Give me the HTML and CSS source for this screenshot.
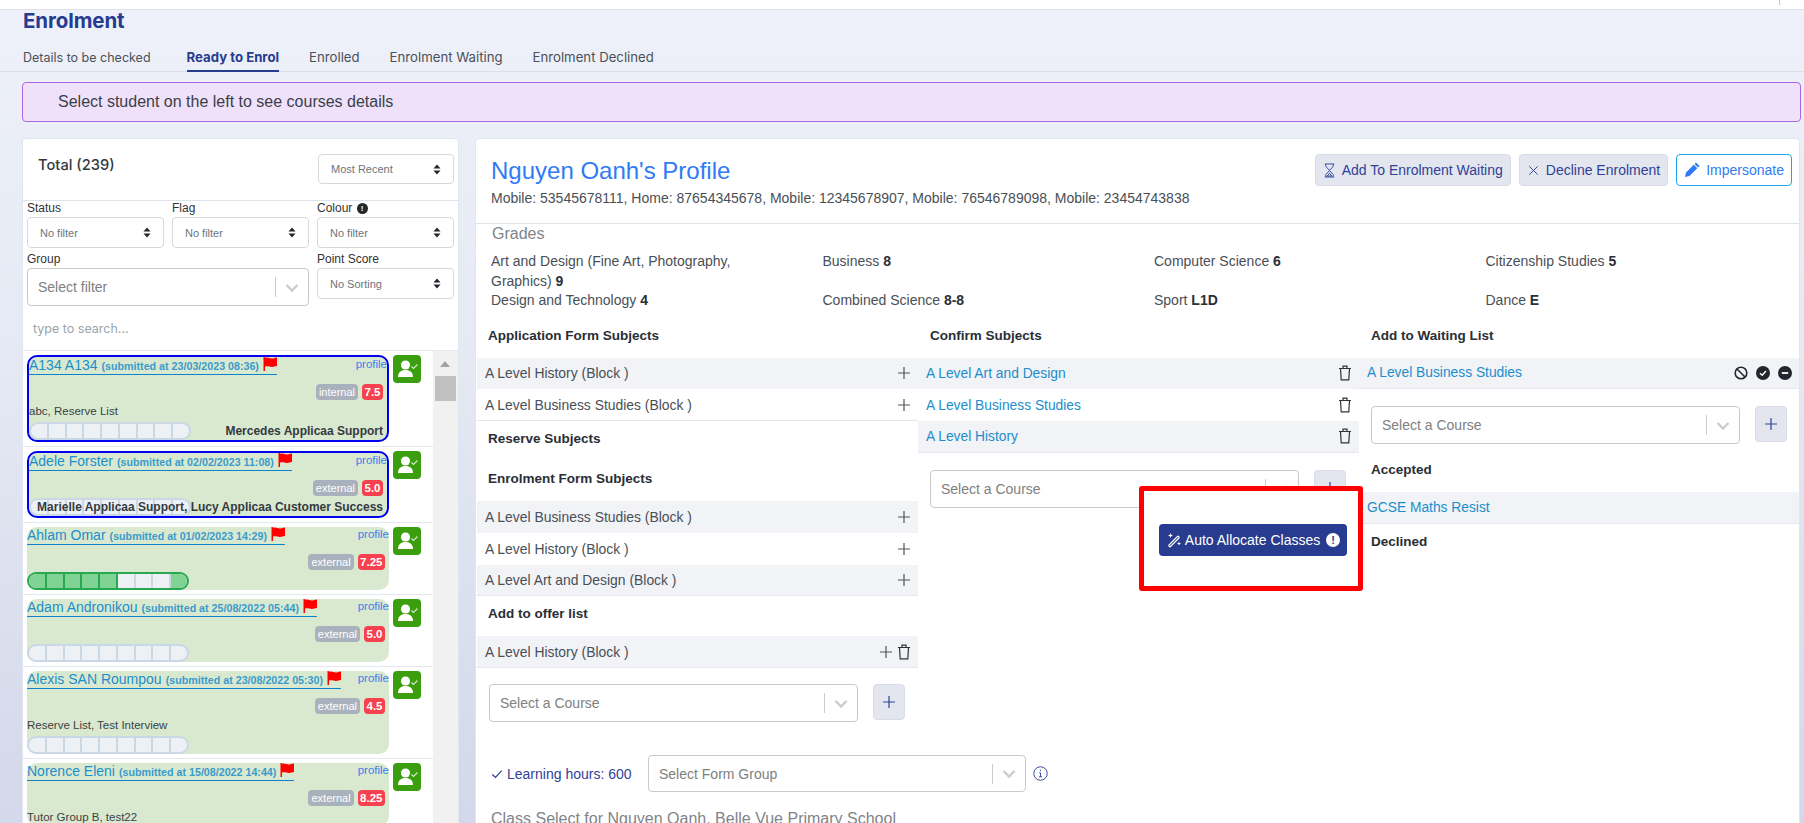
FILE: index.html
```html
<!DOCTYPE html>
<html lang="en">
<head>
<meta charset="utf-8">
<title>Enrolment</title>
<link rel="stylesheet" href="styles.css">
</head>
<body>
<svg class="defs" width="0" height="0" aria-hidden="true">
  <symbol id="sort" viewBox="0 0 10 14"><path d="M5 0.5 9.5 5.8H0.5Z M5 13.5 0.5 8.2H9.5Z"/></symbol>
  <symbol id="chev" viewBox="0 0 14 10"><path d="M1.5 2 7 7.5 12.5 2" fill="none" stroke="currentColor" stroke-width="2.4"/></symbol>
  <symbol id="flag" viewBox="0 0 14 14"><path d="M0.5 0H2V14H0.5Z M2 1C5 -0.3 7 2.2 10 1.4 11.5 1 12.5 0.8 14 0.6V9C12 9.2 11 9.8 9 9.9 6.5 10 5 8.6 2 9.6Z"/></symbol>
  <symbol id="person" viewBox="0 0 28 28"><circle cx="12.5" cy="10" r="4.6" fill="#fff"/><path d="M5 22c0-4.5 3-7 7.5-7s7.5 2.5 7.5 7z" fill="#fff"/><path d="M18.5 11.5l2 2 4-4" fill="none" stroke="#cfe8c0" stroke-width="1.2"/></symbol>
  <symbol id="plus" viewBox="0 0 14 14"><path d="M7 1V13M1 7H13" fill="none" stroke="currentColor" stroke-width="1.2"/></symbol>
  <symbol id="trash" viewBox="0 0 14 16"><path d="M1 3.5H13M5 3.5V1.2H9V3.5M2.5 3.5 3.2 14.8H10.8L11.5 3.5" fill="none" stroke="currentColor" stroke-width="1.2"/></symbol>
</svg>

<div class="topbar"><span class="topbar-tick"></span></div>

<header class="page-head">
  <h1 class="page-title">Enrolment</h1>
  <nav class="tabs">
    <a class="tab tab-first">Details to be checked</a>
    <a class="tab tab-active">Ready to Enrol</a>
    <a class="tab">Enrolled</a>
    <a class="tab">Enrolment Waiting</a>
    <a class="tab">Enrolment Declined</a>
  </nav>
</header>

<div class="alert">Select student on the left to see courses details</div>

<main class="columns">
  <section class="panel side">
    <div class="side-head">
      <div class="total">Total (239)</div>
      <div class="sel sel-recent"><span>Most Recent</span><svg class="sort"><use href="#sort"/></svg></div>
    </div>
    <div class="filters">
      <div class="field">
        <label class="lbl">Status</label>
        <div class="sel"><span>No filter</span><svg class="sort"><use href="#sort"/></svg></div>
      </div>
      <div class="field">
        <label class="lbl">Flag</label>
        <div class="sel"><span>No filter</span><svg class="sort"><use href="#sort"/></svg></div>
      </div>
      <div class="field">
        <label class="lbl">Colour <span class="dot-info">!</span></label>
        <div class="sel"><span>No filter</span><svg class="sort"><use href="#sort"/></svg></div>
      </div>
      <div class="field field-wide">
        <label class="lbl">Group</label>
        <div class="combo combo-filter"><span>Select filter</span><i class="combo-sep"></i><svg class="chev"><use href="#chev"/></svg></div>
      </div>
      <div class="field field-low">
        <label class="lbl">Point Score</label>
        <div class="sel"><span>No Sorting</span><svg class="sort"><use href="#sort"/></svg></div>
      </div>
    </div>
    <div class="search">type to search...</div>

    <div class="list-wrap">
      <div class="list">
        <article class="item">
          <div class="card card-sel">
            <div class="card-top"><a class="name">A134 A134 <small>(submitted at 23/03/2023 08:36)</small> <svg class="flag"><use href="#flag"/></svg></a><a class="profile">profile</a></div>
            <div class="badges"><span class="badge">internal</span><span class="score">7.5</span></div>
            <div class="tags">abc, Reserve List</div>
            <div class="bottom"><div class="bar"><i></i><i></i><i></i><i></i><i></i><i></i><i></i><i></i><i></i></div><div class="staff">Mercedes Applicaa Support</div></div>
          </div>
          <span class="go"><svg><use href="#person"/></svg></span>
        </article>
        <article class="item">
          <div class="card card-sel">
            <div class="card-top"><a class="name">Adele Forster <small>(submitted at 02/02/2023 11:08)</small> <svg class="flag"><use href="#flag"/></svg></a><a class="profile">profile</a></div>
            <div class="badges"><span class="badge">external</span><span class="score">5.0</span></div>
            <div class="bottom"><div class="bar"><i></i><i></i><i></i><i></i><i></i><i></i><i></i><i></i><i></i></div><div class="staff">Marielle Applicaa Support, Lucy Applicaa Customer Success</div></div>
          </div>
          <span class="go"><svg><use href="#person"/></svg></span>
        </article>
        <article class="item">
          <div class="card">
            <div class="card-top"><a class="name">Ahlam Omar <small>(submitted at 01/02/2023 14:29)</small> <svg class="flag"><use href="#flag"/></svg></a><a class="profile">profile</a></div>
            <div class="badges"><span class="badge">external</span><span class="score">7.25</span></div>
            <div class="bottom"><div class="bar bar-on"><i class="on"></i><i class="on"></i><i class="on"></i><i class="on"></i><i class="on"></i><i></i><i></i><i></i><i class="on"></i></div></div>
          </div>
          <span class="go"><svg><use href="#person"/></svg></span>
        </article>
        <article class="item">
          <div class="card">
            <div class="card-top"><a class="name">Adam Andronikou <small>(submitted at 25/08/2022 05:44)</small> <svg class="flag"><use href="#flag"/></svg></a><a class="profile">profile</a></div>
            <div class="badges"><span class="badge">external</span><span class="score">5.0</span></div>
            <div class="bottom"><div class="bar"><i></i><i></i><i></i><i></i><i></i><i></i><i></i><i></i><i></i></div></div>
          </div>
          <span class="go"><svg><use href="#person"/></svg></span>
        </article>
        <article class="item">
          <div class="card">
            <div class="card-top"><a class="name">Alexis SAN Roumpou <small>(submitted at 23/08/2022 05:30)</small> <svg class="flag"><use href="#flag"/></svg></a><a class="profile">profile</a></div>
            <div class="badges"><span class="badge">external</span><span class="score">4.5</span></div>
            <div class="tags">Reserve List, Test Interview</div>
            <div class="bottom"><div class="bar"><i></i><i></i><i></i><i></i><i></i><i></i><i></i><i></i><i></i></div></div>
          </div>
          <span class="go"><svg><use href="#person"/></svg></span>
        </article>
        <article class="item">
          <div class="card">
            <div class="card-top"><a class="name">Norence Eleni <small>(submitted at 15/08/2022 14:44)</small> <svg class="flag"><use href="#flag"/></svg></a><a class="profile">profile</a></div>
            <div class="badges"><span class="badge">external</span><span class="score">8.25</span></div>
            <div class="tags">Tutor Group B, test22</div>
          </div>
          <span class="go"><svg><use href="#person"/></svg></span>
        </article>
      </div>
      <div class="scroll"><i class="scroll-up"></i><i class="scroll-thumb"></i></div>
    </div>
  </section>

  <section class="panel profile-panel">
    <div class="profile-head">
      <div>
        <h2 class="profile-name">Nguyen Oanh's Profile</h2>
        <p class="phones">Mobile: 53545678111, Home: 87654345678, Mobile: 12345678907, Mobile: 76546789098, Mobile: 23454743838</p>
      </div>
      <div class="actions">
        <button class="btn btn-soft"><svg viewBox="0 0 14 16" class="ico"><path d="M2 1H12M2 15H12M3 1V3.5L7 8 3 12.5V15M11 1V3.5L7 8 11 12.5V15M4.5 14H9.5L7 11Z" fill="none" stroke="currentColor" stroke-width="1"/></svg>Add To Enrolment Waiting</button>
        <button class="btn btn-soft"><svg viewBox="0 0 14 16" class="ico"><path d="M2.5 3.5 11.5 12.5M11.5 3.5 2.5 12.5" fill="none" stroke="currentColor" stroke-width="1"/></svg>Decline Enrolment</button>
        <button class="btn btn-line"><svg viewBox="0 0 16 16" class="ico ico-pen"><path d="M12 0.5 15.5 4 14 5.5 10.5 2ZM9.8 2.7 13.3 6.2 5.5 14 1 15 2 10.5Z"/></svg>Impersonate</button>
      </div>
    </div>

    <div class="grades-title">Grades</div>
    <div class="grades">
      <div>Art and Design (Fine Art, Photography, Graphics) <b>9</b></div>
      <div>Business <b>8</b></div>
      <div>Computer Science <b>6</b></div>
      <div>Citizenship Studies <b>5</b></div>
      <div>Design and Technology <b>4</b></div>
      <div>Combined Science <b>8-8</b></div>
      <div>Sport <b>L1D</b></div>
      <div>Dance <b>E</b></div>
    </div>

    <div class="subjects">
      <div class="col col-first">
        <h3 class="sub-title">Application Form Subjects</h3>
        <div class="row row-alt"><span>A Level History (Block )</span><svg class="rico"><use href="#plus"/></svg></div>
        <div class="row row-end"><span>A Level Business Studies (Block )</span><svg class="rico"><use href="#plus"/></svg></div>
        <h3 class="sub-title">Reserve Subjects</h3>
        <h3 class="sub-title">Enrolment Form Subjects</h3>
        <div class="row row-alt"><span>A Level Business Studies (Block )</span><svg class="rico"><use href="#plus"/></svg></div>
        <div class="row"><span>A Level History (Block )</span><svg class="rico"><use href="#plus"/></svg></div>
        <div class="row row-alt row-end"><span>A Level Art and Design (Block )</span><svg class="rico"><use href="#plus"/></svg></div>
        <h3 class="sub-title">Add to offer list</h3>
        <div class="row row-alt row-end"><span>A Level History (Block )</span><span class="row-icons"><svg class="rico"><use href="#plus"/></svg><svg class="rtrash"><use href="#trash"/></svg></span></div>
        <div class="add-row">
          <div class="combo combo-course"><span>Select a Course</span><i class="combo-sep"></i><svg class="chev"><use href="#chev"/></svg></div>
          <button class="plus-btn"><svg><use href="#plus"/></svg></button>
        </div>
      </div>

      <div class="col col-mid">
        <h3 class="sub-title">Confirm Subjects</h3>
        <div class="row row-alt"><a class="row-link">A Level Art and Design</a><svg class="rtrash"><use href="#trash"/></svg></div>
        <div class="row"><a class="row-link">A Level Business Studies</a><svg class="rtrash"><use href="#trash"/></svg></div>
        <div class="row row-alt row-end"><a class="row-link">A Level History</a><svg class="rtrash"><use href="#trash"/></svg></div>
        <div class="add-row">
          <div class="combo combo-course"><span>Select a Course</span><i class="combo-sep"></i><svg class="chev"><use href="#chev"/></svg></div>
          <button class="plus-btn"><svg><use href="#plus"/></svg></button>
        </div>
        <div class="auto-wrap">
          <button class="btn-auto"><svg viewBox="0 0 16 16" class="wand"><path d="M2.5 13.5 12 4M4 15 13.5 5.5M2.5 13.5 4 15M12 4 13.5 5.5" fill="none" stroke="#fff" stroke-width="1.1"/><path d="M4.5 1 5.2 2.8 7 3.5 5.2 4.2 4.5 6 3.8 4.2 2 3.5 3.8 2.8Z M13 9.5 13.6 11 15 11.6 13.6 12.2 13 13.6 12.4 12.2 11 11.6 12.4 11Z" fill="#fff"/></svg>Auto Allocate Classes<span class="auto-dot">!</span></button>
        </div>
        <div class="highlight"></div>
      </div>

      <div class="col">
        <h3 class="sub-title">Add to Waiting List</h3>
        <div class="row row-alt row-end"><a class="row-link">A Level Business Studies</a>
          <span class="row-icons row-status">
            <svg viewBox="0 0 14 14" class="st"><circle cx="7" cy="7" r="5.8" fill="none" stroke="#22262e" stroke-width="1.6"/><path d="M3 3 11 11" stroke="#22262e" stroke-width="1.6"/></svg>
            <svg viewBox="0 0 14 14" class="st"><circle cx="7" cy="7" r="7" fill="#22262e"/><path d="M4 7.2 6.2 9.3 10 5" fill="none" stroke="#fff" stroke-width="1.4"/></svg>
            <svg viewBox="0 0 14 14" class="st"><circle cx="7" cy="7" r="7" fill="#22262e"/><path d="M3.8 7H10.2" stroke="#fff" stroke-width="1.8"/></svg>
          </span>
        </div>
        <div class="add-row">
          <div class="combo combo-course"><span>Select a Course</span><i class="combo-sep"></i><svg class="chev"><use href="#chev"/></svg></div>
          <button class="plus-btn"><svg><use href="#plus"/></svg></button>
        </div>
        <h3 class="sub-title sub-gap">Accepted</h3>
        <div class="row row-alt row-end"><a class="row-link">GCSE Maths Resist</a></div>
        <h3 class="sub-title">Declined</h3>
      </div>
    </div>

    <div class="learning">
      <span class="hours"><svg viewBox="0 0 14 14" class="hours-check"><path d="M1.5 7.5 5.2 11 12.5 3" fill="none" stroke="currentColor" stroke-width="1.5"/></svg>Learning hours: 600</span>
      <div class="combo combo-form"><span>Select Form Group</span><i class="combo-sep"></i><svg class="chev"><use href="#chev"/></svg></div>
      <svg viewBox="0 0 16 16" class="info"><circle cx="8" cy="8" r="7.2" fill="none" stroke="currentColor"/><path d="M8 4V5.4M6.6 7.2H8V11.5M6.4 11.5H9.6" fill="none" stroke="currentColor"/></svg>
    </div>
    <div class="class-select">Class Select for Nguyen Oanh, Belle Vue Primary School</div>
  </section>
</main>
</body>
</html>
```

FILE: styles.css
```css
* { box-sizing: border-box; }
html, body { margin: 0; height: 823px; overflow: hidden; }
body {
  font-family: "Liberation Sans", Arial, sans-serif;
  font-size: 14px;
  color: #333;
  background: linear-gradient(180deg, #eef1f9 0%, #e6eaf4 40%, #d3d8ea 100%);
}
.defs { position: absolute; }
h1, h2, h3, p { margin: 0; }
button { font-family: inherit; cursor: pointer; }

.topbar { height: 10px; background: #fff; border-bottom: 1px solid #dfe2e8; display: flex; justify-content: flex-end; padding-right: 24px; }
.topbar-tick { width: 1px; height: 5px; background: #b9c6cf; }

.page-head { padding: 0 0 0 23px; height: 62px; border-bottom: 1px solid #dcdfe6; }
.page-title { font-family: Inter, sans-serif; font-size: 20.5px; font-weight: 700; line-height: 22px; color: #273b8f; letter-spacing: -0.1px; }
.tabs { display: flex; gap: 30px; margin-top: 13px; }
.tab { font-family: Inter, sans-serif; font-size: 13.2px; height: 27px; line-height: 25px; color: #4b5159; border-bottom: 2px solid transparent; }
.tab-first { font-size: 12.5px; margin-right: 6px; }
.tab-active { color: #273b8f; font-weight: 700; border-bottom-color: #273b8f; }

.alert { margin: 10px 3px 0 22px; height: 40px; line-height: 38px; padding-left: 35px; font-size: 16px; color: #3a3f47; background: #f0e1fa; border: 1px solid #a968e2; border-radius: 4px; }

.columns { display: flex; gap: 16px; margin: 16px 4px 0 22px; align-items: flex-start; }
.panel { background: #fff; border: 1px solid #dfe6ef; border-radius: 4px; height: 700px; overflow: hidden; }
.side { width: 437px; flex: none; }
.profile-panel { flex: 1; min-width: 0; }

.side-head { height: 62px; display: flex; justify-content: space-between; padding: 15px 4px 0 15px; border-bottom: 1px solid #dde3ea; }
.total { font-family: Inter, sans-serif; font-size: 14.7px; font-weight: 500; color: #343a40; line-height: 22px; }
.filters { display: grid; grid-template-columns: 137px 137px 137px; column-gap: 8px; padding: 0 3px 0 4px; }
.field-wide { grid-column: span 2; }
.lbl { display: block; height: 16px; line-height: 14px; font-size: 12px; color: #333; }
.field { height: 51px; }
.field-wide, .field-low { height: 54px; }
.dot-info { display: inline-block; width: 11px; height: 11px; margin-left: 1px; border-radius: 50%; background: #23272e; color: #fff; font-size: 8px; font-weight: 700; line-height: 11px; text-align: center; vertical-align: 1px; }
.sel { height: 31px; border: 1px solid #d5dae1; border-radius: 4px; display: flex; align-items: center; justify-content: space-between; padding: 0 12px 0 12px; font-size: 11px; color: #6c757d; background: #fff; }
.sel-recent { width: 136px; height: 30px; }
.sort { width: 8px; height: 11px; fill: #23272e; }
.combo { display: flex; align-items: center; background: #fff; border: 1px solid #c9c9c9; border-radius: 4px; height: 38px; padding-left: 10px; font-size: 14px; color: #808080; }
.combo > span { flex: 1; }
.combo-sep { width: 1px; height: 20px; background: #ccc; }
.chev { width: 14px; height: 10px; margin: 1px 9px 0 9px; color: #ccc; }
.search { height: 45px; line-height: 46px; padding-left: 10px; font-family: Inter, sans-serif; font-size: 12.5px; color: #9aa5ad; border-bottom: 1px solid #e6e9ee; }

.list-wrap { display: flex; }
.list { width: 410px; flex: none; }
.item { display: flex; gap: 4px; padding: 4px 11px 4px 4px; border-bottom: 1px solid #e4e7ec; }
.card { width: 362px; flex: none; background: #d9e9d0; border-radius: 10px; }
.card-sel { border: 2px solid #0000f0; }
.card-top { height: 27px; display: flex; justify-content: space-between; align-items: flex-start; }
.name { display: inline-flex; align-items: baseline; gap: 4px; height: 18px; line-height: 17px; font-size: 14px; color: #1c8ecb; border-bottom: 1px solid #0d84cc; white-space: nowrap; }
.name small { font-size: 10.7px; font-weight: 700; color: #1c8ecb; opacity: .85; }
.flag { width: 14px; height: 14px; fill: #f00; align-self: flex-start; }
.profile { font-size: 11.5px; color: #3f7df0; line-height: 14px; }
.badges { display: flex; justify-content: flex-end; gap: 4px; height: 16px; margin-right: 4px; }
.badge, .score { font-size: 11px; line-height: 16px; border-radius: 4px; color: #fff; }
.badge { background: #a9b2bc; padding: 0 3px; }
.score { background: #f8414f; font-weight: 700; font-size: 11.5px; padding: 0 2.5px; }
.tags { height: 20px; margin-top: 2px; line-height: 18px; font-size: 11.5px; color: #3b3f45; margin-bottom: -2px; }
.bottom { position: relative; margin-top: 2px; height: 18px; }
.bar { display: flex; width: 162px; height: 18px; border: 2px solid #c9d8e4; border-radius: 9px; background: #edf1f6; overflow: hidden; }
.bar i { flex: 1; border-right: 2px solid #c9d8e4; }
.bar i:last-child { border-right: 0; }
.bar-on { border-color: #2aa84f; }
.bar i.on { background: #7fd494; border-right-color: #2aa84f; }
.staff { position: absolute; right: 4px; top: 0; font-size: 12px; line-height: 18px; font-weight: 700; color: #343a40; white-space: nowrap; }
.go { width: 28px; height: 28px; background: #3a9e0f; border-radius: 4px; flex: none; }
.go svg { width: 28px; height: 28px; display: block; }

.scroll { flex: 1; background: #f1f1f1; position: relative; height: 480px; }
.scroll-up { position: absolute; left: 7px; top: 10px; border: 5.5px solid transparent; border-top: 0; border-bottom: 6px solid #a3a3a3; }
.scroll-thumb { position: absolute; left: 2px; right: 2px; top: 25px; height: 25px; background: #c1c1c1; }

.profile-head { height: 85px; padding: 15px 7px 0 15px; display: flex; justify-content: space-between; border-bottom: 1px solid #dfe3e8; }
.profile-name { font-size: 24px; font-weight: 400; color: #2f7bf5; line-height: 34px; }
.phones { font-size: 14px; color: #4a4f56; line-height: 18px; margin-top: 1px; }
.actions { display: flex; gap: 8px; align-items: flex-start; }
.btn { height: 32px; display: inline-flex; align-items: center; gap: 6px; padding: 0 7px; border-radius: 4px; font-size: 14px; white-space: nowrap; }
.btn-soft { background: #e3e6ef; border: 1px solid #d8dce6; color: #2f4296; }
.btn-line { background: #fff; border: 1px solid #1ea7e8; color: #2f7bf5; }
.ico { width: 13px; height: 15px; }
.ico-pen { fill: #2f7bf5; width: 16px; height: 16px; }

.grades-title { font-size: 16px; line-height: 20px; color: #808489; padding: 0 0 0 16px; }
.grades { display: grid; grid-template-columns: repeat(4, 331.5px); padding: 8px 0 0 15px; font-size: 14px; line-height: 19.5px; color: #4a4f56; }
.grades > div { max-width: 270px; }
.grades b { color: #2b2f36; }

.subjects { display: grid; grid-template-columns: 441px 441px 441px; margin-top: 7px; padding-left: 1px; }
.col { min-width: 0; }
.col-mid { position: relative; }
.sub-title { height: 40px; line-height: 36px; padding-left: 12px; font-size: 13.5px; font-weight: 700; color: #2a2e35; }
.col-first .sub-title { padding-left: 11px; }
.row { height: 31.75px; display: flex; align-items: center; justify-content: space-between; padding: 0 7px 0 8px; font-size: 13.9px; color: #4a4f56; }
.row-alt { background: #f1f3f7; }
.row-end { border-bottom: 1px solid #e4e7ee; }
.row-link { color: #1c8ecb; font-size: 13.8px; }
.rico { width: 14px; height: 14px; color: #555; display: block; }
.rtrash { width: 14px; height: 16px; color: #333; display: block; }
.row-icons { display: inline-flex; gap: 4px; align-items: center; }
.row-status { gap: 8px; margin-right: 1px; }
.st { width: 14px; height: 14px; display: block; }
.add-row { display: flex; gap: 15px; margin: 16px 0 0 12px; }
.col-mid .add-row, .col:last-child .add-row { margin-top: 17px; }
.combo-course { width: 369px; }
.plus-btn { width: 32px; height: 36px; padding: 0; display: flex; align-items: center; justify-content: center; background: #e3e6ef; border: 1px solid #d8dce6; border-radius: 4px; color: #2f4296; }
.plus-btn svg { width: 14px; height: 14px; }

.auto-wrap { display: flex; justify-content: flex-end; margin: 16px 12px 0 0; }
.btn-auto { position: relative; z-index: 2; height: 32px; width: 188px; display: flex; align-items: center; justify-content: center; gap: 3px; background: #273b8f; color: #fff; border: 0; border-radius: 4px; font-size: 14px; padding: 0; white-space: nowrap; }
.wand { width: 16px; height: 16px; }
.auto-dot { width: 14px; height: 14px; margin-left: 3px; background: #fff; color: #273b8f; border-radius: 50%; font-size: 11px; font-weight: 700; line-height: 14px; text-align: center; }
.highlight { position: absolute; z-index: 1; left: 221px; top: 168px; width: 224px; height: 105px; background: #fff; border: 5px solid #f00; border-radius: 3px; }
.sub-gap { margin-top: 8px; }

.learning { display: flex; align-items: center; margin: 33px 0 0 15px; }
.hours { width: 157px; display: inline-flex; align-items: center; gap: 4px; font-size: 14px; color: #2f4296; white-space: nowrap; }
.hours-check { width: 12px; height: 12px; }
.combo-form { width: 378px; height: 37px; }
.info { width: 15px; height: 15px; margin-left: 7px; color: #2f4296; }
.class-select { margin: 18px 0 0 15px; font-size: 16px; color: #7f8489; }
```
